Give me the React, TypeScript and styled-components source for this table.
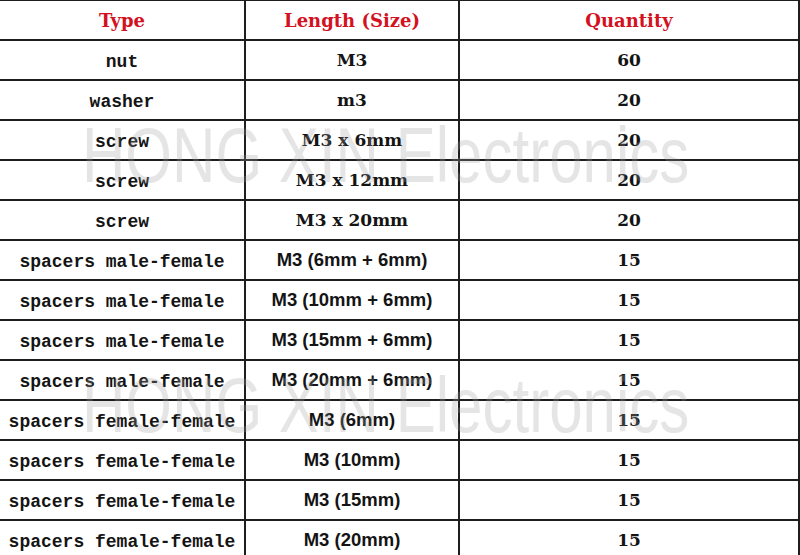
import React from "react";
import styled, { createGlobalStyle } from "styled-components";

const Global = createGlobalStyle`
  html, body { margin: 0; padding: 0; background: #fff; overflow: hidden; }
  body { width: 800px; height: 555px; }
`;

const Page = styled.div`
  position: relative;
  width: 800px;
  height: 555px;
  overflow: hidden;
  background: #fff;
`;

const Table = styled.div`
  display: grid;
  grid-template-columns: 244px 212px 338px;
  grid-auto-rows: 38px;
  gap: 2px;
  padding: 1px 2px 2px 0;
  background: #1e1e1e;
  width: 800px;
  box-sizing: border-box;
`;

type Kind = "head" | "mono" | "serif" | "sans";

const Cell = styled.div<{ $kind: Kind }>`
  background: #fff;
  display: flex;
  align-items: center;
  justify-content: center;
  white-space: nowrap;
  color: ${(p) => (p.$kind === "head" ? "#d3121f" : "#141414")};
  font-weight: bold;
  font-family: ${(p) =>
    p.$kind === "mono"
      ? '"Liberation Mono", "DejaVu Sans Mono", monospace'
      : p.$kind === "sans"
      ? '"Liberation Sans", Arial, sans-serif'
      : '"DejaVu Serif", "Liberation Serif", serif'};
  font-size: ${(p) =>
    p.$kind === "mono" ? "18px" : p.$kind === "sans" ? "18.5px" : p.$kind === "head" ? "18px" : "17px"};
  padding-top: ${(p) => (p.$kind === "mono" ? "4px" : "0")};
  box-sizing: border-box;
`;

const Watermark = styled.div<{ $top: number }>`
  position: absolute;
  left: 82px;
  top: ${(p) => p.$top}px;
  font-family: "Liberation Sans", Arial, sans-serif;
  font-size: 77px;
  line-height: 1;
  color: rgba(160, 160, 160, 0.27);
  transform: scaleX(0.78);
  transform-origin: left top;
  white-space: nowrap;
  pointer-events: none;
`;

type Row = { type: string; size: string; qty: string; sans?: boolean };

const rows: Row[] = [
  { type: "nut", size: "M3", qty: "60" },
  { type: "washer", size: "m3", qty: "20" },
  { type: "screw", size: "M3 x 6mm", qty: "20" },
  { type: "screw", size: "M3 x 12mm", qty: "20" },
  { type: "screw", size: "M3 x 20mm", qty: "20" },
  { type: "spacers male-female", size: "M3 (6mm + 6mm)", qty: "15", sans: true },
  { type: "spacers male-female", size: "M3 (10mm + 6mm)", qty: "15", sans: true },
  { type: "spacers male-female", size: "M3 (15mm + 6mm)", qty: "15", sans: true },
  { type: "spacers male-female", size: "M3 (20mm + 6mm)", qty: "15", sans: true },
  { type: "spacers female-female", size: "M3 (6mm)", qty: "15", sans: true },
  { type: "spacers female-female", size: "M3 (10mm)", qty: "15", sans: true },
  { type: "spacers female-female", size: "M3 (15mm)", qty: "15", sans: true },
  { type: "spacers female-female", size: "M3 (20mm)", qty: "15", sans: true },
];

export default function App() {
  return (
    <Page>
      <Global />
      <Table>
        <Cell $kind="head">Type</Cell>
        <Cell $kind="head">Length (Size)</Cell>
        <Cell $kind="head">Quantity</Cell>
        {rows.map((r, i) => (
          <React.Fragment key={i}>
            <Cell $kind="mono">{r.type}</Cell>
            <Cell $kind={r.sans ? "sans" : "serif"}>{r.size}</Cell>
            <Cell $kind="serif">{r.qty}</Cell>
          </React.Fragment>
        ))}
      </Table>
      <Watermark $top={117}>HONG XIN Electronics</Watermark>
      <Watermark $top={367}>HONG XIN Electronics</Watermark>
    </Page>
  );
}
